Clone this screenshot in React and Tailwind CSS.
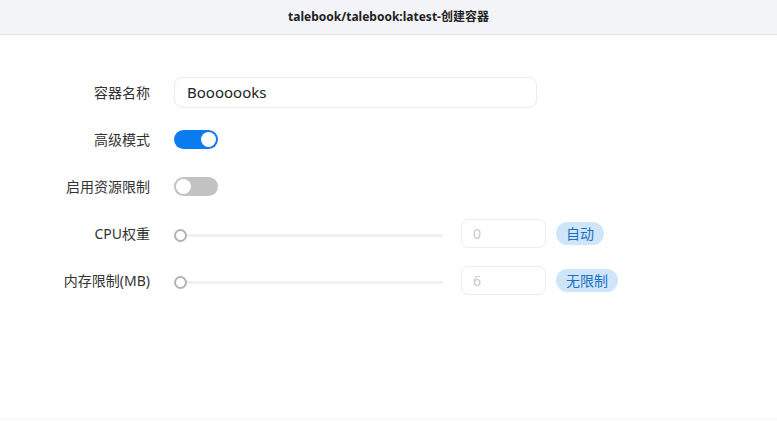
import React from "react";

const font = { fontFamily: '"Noto Sans", "Noto Sans CJK SC", sans-serif' };

function Row({ label, children }) {
  return (
    <div className="flex h-[47px] items-center">
      <div className="w-[150px] shrink-0 text-right text-[14px] text-[#333]">{label}</div>
      <div className="ml-[24px] flex items-center">{children}</div>
    </div>
  );
}

function Toggle({ on }) {
  return (
    <div
      className={
        "flex h-[19px] w-[44px] items-center rounded-full px-[2px] " +
        (on ? "justify-end bg-[#0a7cf0]" : "justify-start bg-[#c2c2c2]")
      }
    >
      <div className="h-[15px] w-[15px] rounded-full bg-white" />
    </div>
  );
}

function SliderRow({ value, badge }) {
  return (
    <div className="flex items-center">
      <div className="mt-[4px] flex w-[269px] items-center">
        <div className="h-[13px] w-[13px] shrink-0 rounded-full border-2 border-[#b3b3b3] bg-white" />
        <div className="h-[3px] flex-1 bg-[#f0f0f0]" />
      </div>
      <div className="ml-[18px] flex h-[29px] w-[85px] items-center rounded-[7px] border border-[#ededed] px-[11px] text-[14px] text-[#c8c8c8]">
        {value}
      </div>
      <div className="ml-[10px] flex h-[23px] items-center rounded-full bg-[#cfe5fa] px-[10px] text-[14px] text-[#1b6fc5]">
        {badge}
      </div>
    </div>
  );
}

export default function App() {
  return (
    <div className="flex h-[421px] w-full flex-col bg-white" style={font}>
      <div className="flex h-[35px] shrink-0 items-center justify-center border-b border-[#e3e4e8] bg-[#f3f4f8] text-[12px] font-bold text-[#222]">
        talebook/talebook:latest-创建容器
      </div>
      <div className="flex flex-1 flex-col pt-[34px]">
        <Row label="容器名称">
          <div className="flex h-[31px] w-[363px] items-center rounded-[8px] border border-[#ececec] px-[12px] text-[15px] text-[#222]">
            Booooooks
          </div>
        </Row>
        <Row label="高级模式">
          <Toggle on />
        </Row>
        <Row label="启用资源限制">
          <Toggle />
        </Row>
        <Row label="CPU权重">
          <SliderRow value="0" badge="自动" />
        </Row>
        <Row label="内存限制(MB)">
          <SliderRow value="6" badge="无限制" />
        </Row>
      </div>
      <div className="h-[4px] shrink-0 bg-[#fbfbfb]" />
    </div>
  );
}
